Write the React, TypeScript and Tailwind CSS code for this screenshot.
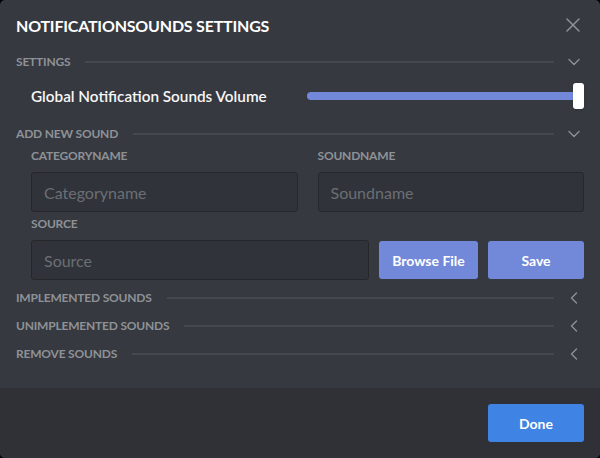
import { X, ChevronDown, ChevronLeft } from "lucide-react"

const font = { fontFamily: "Lato, 'Open Sans', sans-serif" }

function SectionHeader({ title, open }: { title: string; open?: boolean }) {
  return (
    <div className="flex h-7 items-center">
      <span className="text-[12px] font-bold uppercase leading-none tracking-[-0.2px] text-[#8e9297]">{title}</span>
      <div className="ml-[15px] h-[2px] flex-1 bg-[#45484e]" />
      <div className="ml-[10px] flex w-5 justify-center text-[#8e9297]">
        {open ? (
          <ChevronDown className="h-5 w-5" strokeWidth={1.6} />
        ) : (
          <ChevronLeft className="h-5 w-5" strokeWidth={1.6} />
        )}
      </div>
    </div>
  )
}

function Field({ label, placeholder }: { label: string; placeholder: string }) {
  return (
    <div className="flex flex-col">
      <div className="flex h-4 items-center text-[12px] font-bold uppercase leading-none tracking-[-0.2px] text-[#8e9297]">{label}</div>
      <input
        placeholder={placeholder}
        className="mt-2 h-10 w-full rounded-[3px] border border-[#25272b] bg-[#303339] px-3 text-[16px] text-[#dcddde] outline-none placeholder:text-[#6b6f75]"
      />
    </div>
  )
}

export default function App() {
  return (
    <div className="h-[458px] w-[600px] bg-black" style={font}>
      <div className="flex h-full w-full flex-col overflow-hidden rounded-[5px] bg-[#36393f]">
        {/* Body */}
        <div className="flex-1 px-4">
          <div className="flex h-[48px] items-center justify-between pt-[3px]">
            <h2 className="text-[16px] font-bold uppercase leading-none tracking-[-0.2px] text-white">NotificationSounds Settings</h2>
            <button className="-mr-[1px] -mt-[2px] text-[#8e9297]">
              <X className="h-6 w-6" strokeWidth={1.5} />
            </button>
          </div>

          <SectionHeader title="Settings" open />

          <div className="flex h-[40px] items-center pl-[15px]">
            <span className="flex-1 text-[15.3px] font-semibold text-[#f6f6f7]">Global Notification Sounds Volume</span>
            <div className="relative flex h-[26px] w-[277px] items-center">
              <div className="h-2 w-full rounded-full bg-[#7289da]" />
              <div className="absolute right-0 top-0 h-[26px] w-[11px] rounded-[3px] bg-white shadow" />
            </div>
          </div>

          <div className="mt-[4px]">
            <SectionHeader title="Add new sound" open />
          </div>

          <div className="pl-[15px]">
            <div className="grid grid-cols-2 gap-5">
              <Field label="Categoryname" placeholder="Categoryname" />
              <Field label="Soundname" placeholder="Soundname" />
            </div>
            <div className="mt-1 flex h-4 items-center text-[12px] font-bold uppercase leading-none tracking-[-0.2px] text-[#8e9297]">Source</div>
            <div className="mt-2 flex gap-[10px]">
              <input
                placeholder="Source"
                className="h-10 flex-1 rounded-[3px] border border-[#25272b] bg-[#303339] px-3 text-[16px] text-[#dcddde] outline-none placeholder:text-[#6b6f75]"
              />
              <button className="my-px h-[38px] w-[99px] rounded-[3px] bg-[#7289da] text-[14px] font-bold text-white">Browse File</button>
              <button className="my-px h-[38px] w-[96px] rounded-[3px] bg-[#7289da] text-[14px] font-bold text-white">Save</button>
            </div>
          </div>

          <div className="mt-1">
            <SectionHeader title="Implemented sounds" />
            <SectionHeader title="Unimplemented sounds" />
            <SectionHeader title="Remove sounds" />
          </div>
        </div>

        {/* Footer */}
        <div className="flex h-[70px] items-center justify-end bg-[#2f3136] px-4">
          <button className="h-[38px] w-[96px] rounded-[3px] bg-[#3f83e4] text-[14px] font-bold text-white">Done</button>
        </div>
      </div>
    </div>
  )
}
